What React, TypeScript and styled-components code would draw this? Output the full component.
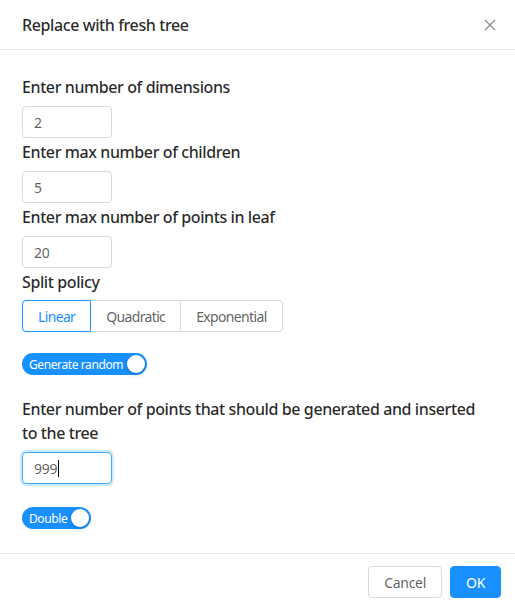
import React from "react";
import styled, { createGlobalStyle } from "styled-components";

const Global = createGlobalStyle`
  html, body { margin: 0; padding: 0; background: #fff; }
  body { font-family: "Noto Sans", "Open Sans", sans-serif; -webkit-font-smoothing: antialiased; }
  * { box-sizing: border-box; }
`;

const Modal = styled.div`
  width: 515px;
  height: 603px;
  background: #fff;
  display: flex;
  flex-direction: column;
`;

const Header = styled.div`
  height: 50px;
  display: flex;
  align-items: center;
  justify-content: space-between;
  padding: 0 13px 0 22px;
  border-bottom: 1px solid #e8e8e8;
`;

const Title = styled.div`
  font-size: 16px;
  font-weight: 500;
  letter-spacing: -0.4px;
  color: rgba(0, 0, 0, 0.85);
  line-height: 22px;
  margin-top: 1px;
`;

const Close = styled.button`
  border: none;
  background: none;
  padding: 0;
  width: 24px;
  height: 24px;
  display: flex;
  align-items: center;
  justify-content: center;
  color: rgba(0, 0, 0, 0.45);
  cursor: pointer;
`;

const Body = styled.div`
  flex: 1;
  padding: 25px 22px 0 22px;
  display: flex;
  flex-direction: column;
  align-items: flex-start;
`;

const Label = styled.div<{ $mt?: number }>`
  font-size: 16px;
  font-weight: 500;
  letter-spacing: -0.4px;
  line-height: 24px;
  color: rgba(0, 0, 0, 0.85);
  margin-top: ${(p) => p.$mt ?? 0}px;
  margin-bottom: 7px;
`;

const Input = styled.input`
  width: 90px;
  height: 32px;
  padding: 4px 11px;
  font-family: inherit;
  font-size: 14px;
  letter-spacing: -0.3px;
  color: rgba(0, 0, 0, 0.65);
  border: 1px solid #d9d9d9;
  border-radius: 4px;
  outline: none;
  margin-bottom: 2px;
  background: #fff;
`;

const FocusedInput = styled.div`
  width: 90px;
  height: 32px;
  padding: 0 11px;
  display: flex;
  align-items: center;
  font-size: 14px;
  letter-spacing: -0.3px;
  color: rgba(0, 0, 0, 0.65);
  border: 1px solid #40a9ff;
  border-radius: 4px;
  box-shadow: 0 0 0 2px rgba(24, 144, 255, 0.2);
`;

const Caret = styled.span`
  display: inline-block;
  width: 1px;
  height: 17px;
  background: #000;
  margin-left: 1px;
`;

const RadioGroup = styled.div`
  display: flex;
  margin-top: -1px;
`;

const RadioButton = styled.button<{ $active?: boolean }>`
  height: 32px;
  padding: 0 15px;
  font-family: inherit;
  font-size: 14px;
  letter-spacing: -0.65px;
  background: #fff;
  color: ${(p) => (p.$active ? "#1890ff" : "rgba(0,0,0,0.65)")};
  border: 1px solid ${(p) => (p.$active ? "#1890ff" : "#d9d9d9")};
  margin-left: -1px;
  position: relative;
  z-index: ${(p) => (p.$active ? 1 : 0)};
  cursor: pointer;
  &:first-child { margin-left: 0; border-radius: 4px 0 0 4px; }
  &:last-child { border-radius: 0 4px 4px 0; }
`;

const Switch = styled.button<{ $mt: number }>`
  margin-top: ${(p) => p.$mt}px;
  height: 22px;
  border-radius: 11px;
  background: #1890ff;
  border: none;
  padding: 0 2px 0 7px;
  display: flex;
  align-items: center;
  gap: 4px;
  font-family: inherit;
  font-size: 12px;
  letter-spacing: -0.4px;
  color: #fff;
  cursor: pointer;
`;

const Knob = styled.span`
  width: 18px;
  height: 18px;
  border-radius: 50%;
  background: #fff;
  box-shadow: 0 2px 4px rgba(0, 35, 11, 0.2);
`;

const Footer = styled.div`
  height: 50px;
  border-top: 1px solid #e8e8e8;
  display: flex;
  justify-content: flex-end;
  align-items: flex-start;
  padding: 12px 14px 0 0;
  gap: 8px;
`;

const Button = styled.button<{ $primary?: boolean }>`
  height: 32px;
  padding: 0 15px;
  border-radius: 4px;
  font-family: inherit;
  font-size: 14px;
  letter-spacing: -0.3px;
  cursor: pointer;
  border: 1px solid ${(p) => (p.$primary ? "#1890ff" : "#d9d9d9")};
  background: ${(p) => (p.$primary ? "#1890ff" : "#fff")};
  color: ${(p) => (p.$primary ? "#fff" : "rgba(0,0,0,0.65)")};
`;

export default function App() {
  return (
    <>
      <Global />
      <Modal>
        <Header>
          <Title>Replace with fresh tree</Title>
          <Close aria-label="Close">
            <svg width="12" height="12" viewBox="0 0 12 12">
              <path d="M1 1 L11 11 M11 1 L1 11" stroke="currentColor" strokeWidth="1.2" fill="none" />
            </svg>
          </Close>
        </Header>
        <Body>
          <Label>Enter number of dimensions</Label>
          <Input defaultValue="2" />
          <Label>Enter max number of children</Label>
          <Input defaultValue="5" />
          <Label>Enter max number of points in leaf</Label>
          <Input defaultValue="20" />
          <Label>Split policy</Label>
          <RadioGroup>
            <RadioButton $active>Linear</RadioButton>
            <RadioButton>Quadratic</RadioButton>
            <RadioButton>Exponential</RadioButton>
          </RadioGroup>
          <Switch $mt={21}>
            Generate random
            <Knob />
          </Switch>
          <Label $mt={22}>
            Enter number of points that should be generated and inserted to the tree
          </Label>
          <FocusedInput>
            999
            <Caret />
          </FocusedInput>
          <Switch $mt={23}>
            Double
            <Knob />
          </Switch>
        </Body>
        <Footer>
          <Button>Cancel</Button>
          <Button $primary>OK</Button>
        </Footer>
      </Modal>
    </>
  );
}
